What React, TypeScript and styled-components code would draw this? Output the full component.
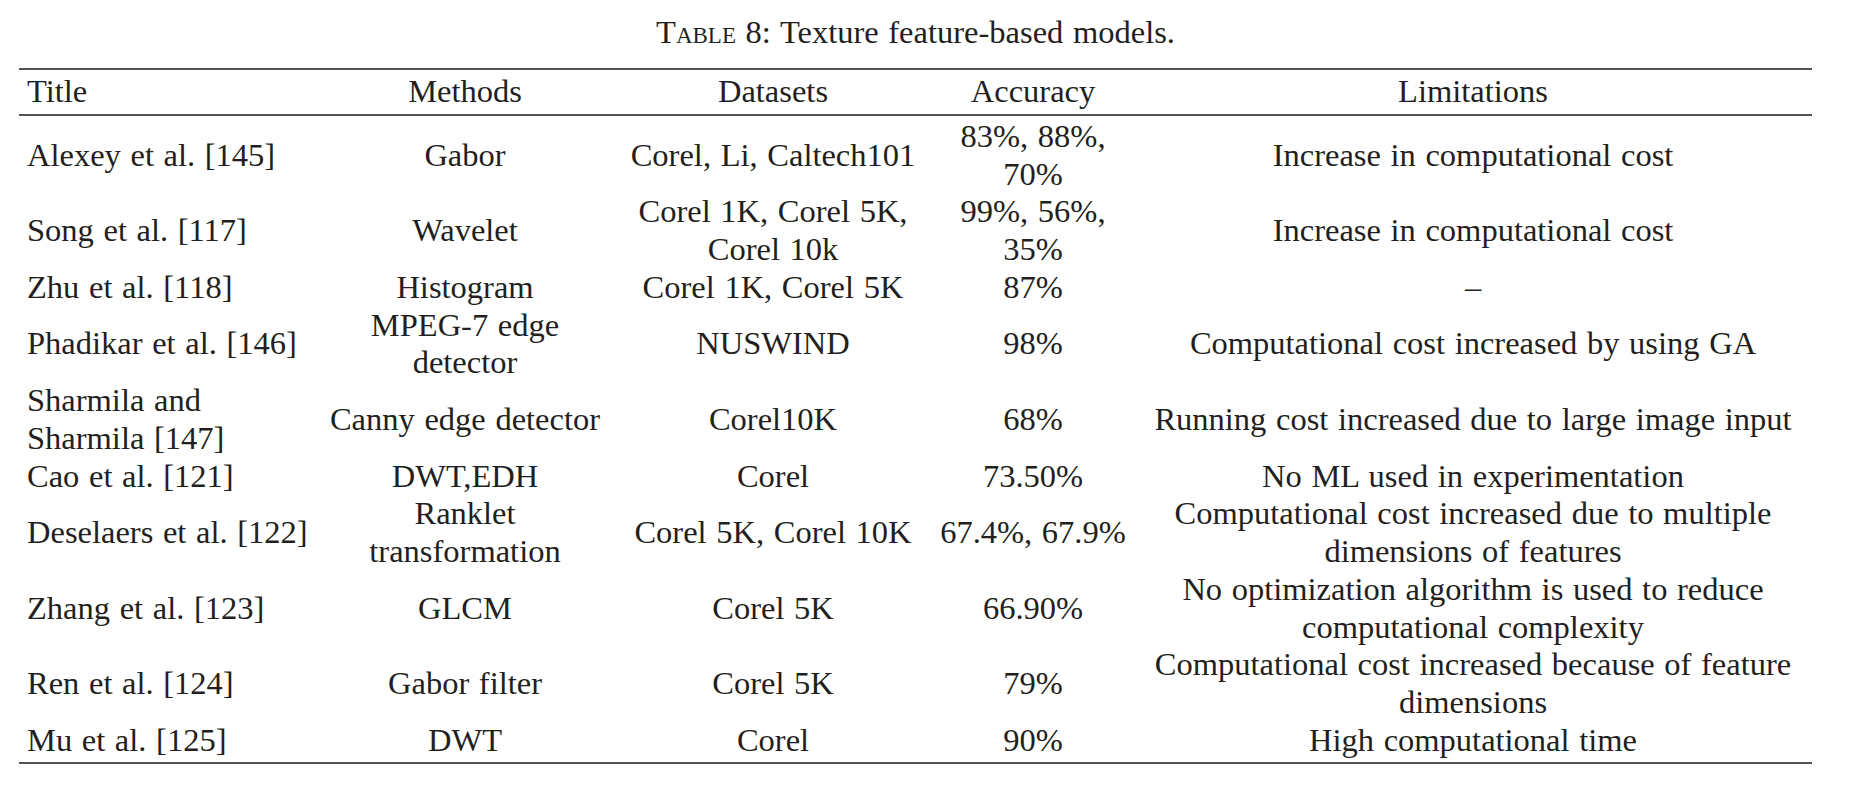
import styled, { createGlobalStyle } from "styled-components";

interface IModel {
  title: string[];
  methods: string[];
  datasets: string[];
  accuracy: string[];
  limitations: string[];
}

const models: IModel[] = [
  {
    title: ["Alexey et al. [145]"],
    methods: ["Gabor"],
    datasets: ["Corel, Li, Caltech101"],
    accuracy: ["83%, 88%,", "70%"],
    limitations: ["Increase in computational cost"],
  },
  {
    title: ["Song et al. [117]"],
    methods: ["Wavelet"],
    datasets: ["Corel 1K, Corel 5K,", "Corel 10k"],
    accuracy: ["99%, 56%,", "35%"],
    limitations: ["Increase in computational cost"],
  },
  {
    title: ["Zhu et al. [118]"],
    methods: ["Histogram"],
    datasets: ["Corel 1K, Corel 5K"],
    accuracy: ["87%"],
    limitations: ["–"],
  },
  {
    title: ["Phadikar et al. [146]"],
    methods: ["MPEG-7 edge", "detector"],
    datasets: ["NUSWIND"],
    accuracy: ["98%"],
    limitations: ["Computational cost increased by using GA"],
  },
  {
    title: ["Sharmila and", "Sharmila [147]"],
    methods: ["Canny edge detector"],
    datasets: ["Corel10K"],
    accuracy: ["68%"],
    limitations: ["Running cost increased due to large image input"],
  },
  {
    title: ["Cao et al. [121]"],
    methods: ["DWT,EDH"],
    datasets: ["Corel"],
    accuracy: ["73.50%"],
    limitations: ["No ML used in experimentation"],
  },
  {
    title: ["Deselaers et al. [122]"],
    methods: ["Ranklet", "transformation"],
    datasets: ["Corel 5K, Corel 10K"],
    accuracy: ["67.4%, 67.9%"],
    limitations: ["Computational cost increased due to multiple", "dimensions of features"],
  },
  {
    title: ["Zhang et al. [123]"],
    methods: ["GLCM"],
    datasets: ["Corel 5K"],
    accuracy: ["66.90%"],
    limitations: ["No optimization algorithm is used to reduce", "computational complexity"],
  },
  {
    title: ["Ren et al. [124]"],
    methods: ["Gabor filter"],
    datasets: ["Corel 5K"],
    accuracy: ["79%"],
    limitations: ["Computational cost increased because of feature", "dimensions"],
  },
  {
    title: ["Mu et al. [125]"],
    methods: ["DWT"],
    datasets: ["Corel"],
    accuracy: ["90%"],
    limitations: ["High computational time"],
  },
];

// print each line of a cell on its own row
function Lines({ lines }: { lines: string[] }) {
  return (
    <>
      {lines.map((line, i) => (
        <span key={i}>
          {i > 0 && <br />}
          {line}
        </span>
      ))}
    </>
  );
}

export default function App() {
  return (
    <Page>
      <GlobalStyle />
      <Caption>
        <SmallCaps>Table</SmallCaps> 8: Texture feature-based models.
      </Caption>
      <Table>
        <Head>
          <Row>
            <Cell $align="left">Title</Cell>
            <Cell>Methods</Cell>
            <Cell>Datasets</Cell>
            <Cell>Accuracy</Cell>
            <Cell>Limitations</Cell>
          </Row>
        </Head>
        <Body>
          {models.map((m) => (
            <Row key={m.title.join(" ")}>
              <Cell $align="left">
                <Lines lines={m.title} />
              </Cell>
              <Cell>
                <Lines lines={m.methods} />
              </Cell>
              <Cell>
                <Lines lines={m.datasets} />
              </Cell>
              <Cell>
                <Lines lines={m.accuracy} />
              </Cell>
              <Cell>
                <Lines lines={m.limitations} />
              </Cell>
            </Row>
          ))}
        </Body>
      </Table>
    </Page>
  );
}

const GlobalStyle = createGlobalStyle`
  html, body {
    margin: 0;
    padding: 0;
    background: #ffffff;
  }
  body {
    font-family: "Liberation Serif", "Times New Roman", serif;
    color: #231f20;
  }
`;

const Page = styled.div`
  padding: 14px 0 0 19px;
  font-size: 32.5px;
  line-height: 37.75px;
  word-spacing: 1.5px;
`;

const Caption = styled.div`
  width: 1793px;
  text-align: center;
  margin-bottom: 16.25px;
`;

const SmallCaps = styled.span`
  font-variant: small-caps;
`;

const Table = styled.div`
  width: 1793px;
`;

const Head = styled.div`
  border-top: 2px solid #535355;
  border-bottom: 2px solid #535355;
  padding: 3px 0;
`;

const Body = styled.div`
  border-bottom: 2px solid #535355;
  padding: 2px 0;
`;

const Row = styled.div`
  display: grid;
  grid-template-columns: 297px 298px 318px 202px 678px;
  align-items: center;
`;

const Cell = styled.div<{ $align?: "left" | "center" }>`
  text-align: ${(props) => props.$align ?? "center"};
  padding-left: ${(props) => (props.$align === "left" ? "8px" : "0")};
  white-space: nowrap;
`;
